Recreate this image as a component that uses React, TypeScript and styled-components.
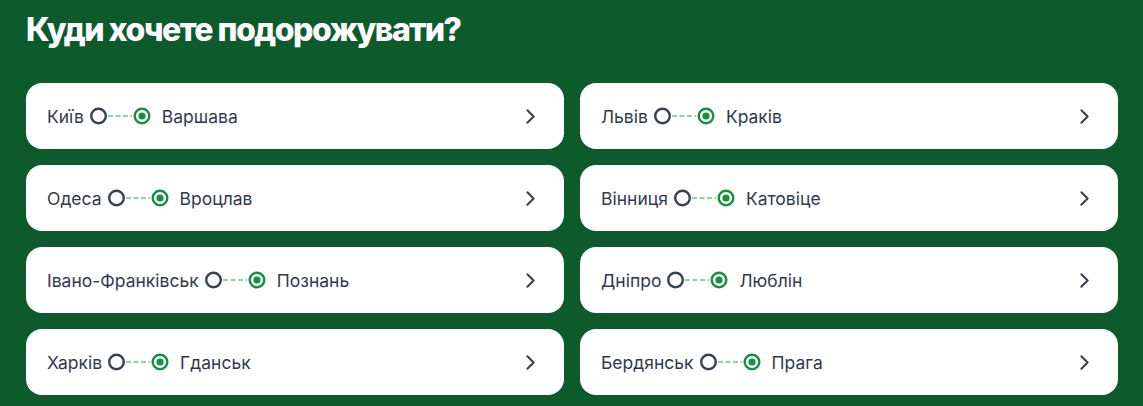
import styled, { createGlobalStyle } from 'styled-components';

const GlobalStyle = createGlobalStyle`
  body {
    margin: 0;
    background: #0d5b2d;
    font-family: Inter, "Noto Sans", sans-serif;
  }
`;

const Section = styled.section`
  background: #0d5b2d;
  padding: 11px 25px 11px 26px;
`;

const Title = styled.h2`
  margin: 0 0 34px;
  color: #ffffff;
  font-size: 32px;
  line-height: 38px;
  font-weight: 800;
  letter-spacing: -1.5px;
`;

const Grid = styled.div`
  display: grid;
  grid-template-columns: 1fr 1fr;
  gap: 16px;
`;

const Card = styled.a`
  display: flex;
  align-items: center;
  height: 66px;
  padding: 0 21px 0 21px;
  background: #ffffff;
  border-radius: 16px;
  color: #323a4a;
  font-size: 17.5px;
  text-decoration: none;
  cursor: pointer;
`;

const Route = styled.div`
  flex: 1;
  display: flex;
  align-items: center;
`;

const City = styled.span`
  white-space: nowrap;
`;

const RouteIcon = styled.svg`
  width: 61px;
  height: 18px;
  margin: 0 11px 0 6px;
  flex-shrink: 0;
`;

const Chevron = styled.svg`
  width: 25px;
  height: 25px;
  color: #3a4050;
`;

const routes = [
  ['Київ', 'Варшава'],
  ['Львів', 'Краків'],
  ['Одеса', 'Вроцлав'],
  ['Вінниця', 'Катовіце'],
  ['Івано-Франківськ', 'Познань'],
  ['Дніпро', 'Люблін'],
  ['Харків', 'Гданськ'],
  ['Бердянськ', 'Прага'],
];

const RouteMark = () => (
  <RouteIcon viewBox="0 0 61 18">
    <circle cx="8.5" cy="9" r="7.3" fill="none" stroke="#3b4152" strokeWidth="2.4" />
    <line x1="18" y1="9" x2="42" y2="9" stroke="#86d9a0" strokeWidth="1.8" strokeDasharray="5 2.5" />
    <circle cx="52" cy="9" r="7.3" fill="none" stroke="#17913f" strokeWidth="2.4" />
    <circle cx="52" cy="9" r="3.6" fill="#17913f" />
  </RouteIcon>
);

const App = () => (
  <>
    <GlobalStyle />
    <Section>
      <Title>Куди хочете подорожувати?</Title>
      <Grid>
        {routes.map(([from, to]) => (
          <Card key={from + to}>
            <Route>
              <City>{from}</City>
              <RouteMark />
              <City>{to}</City>
            </Route>
            <Chevron viewBox="0 0 24 24" fill="none" stroke="currentColor" strokeWidth="2" strokeLinecap="round" strokeLinejoin="round">
              <path d="m9 18 6-6-6-6" />
            </Chevron>
          </Card>
        ))}
      </Grid>
    </Section>
  </>
);

export default App;
